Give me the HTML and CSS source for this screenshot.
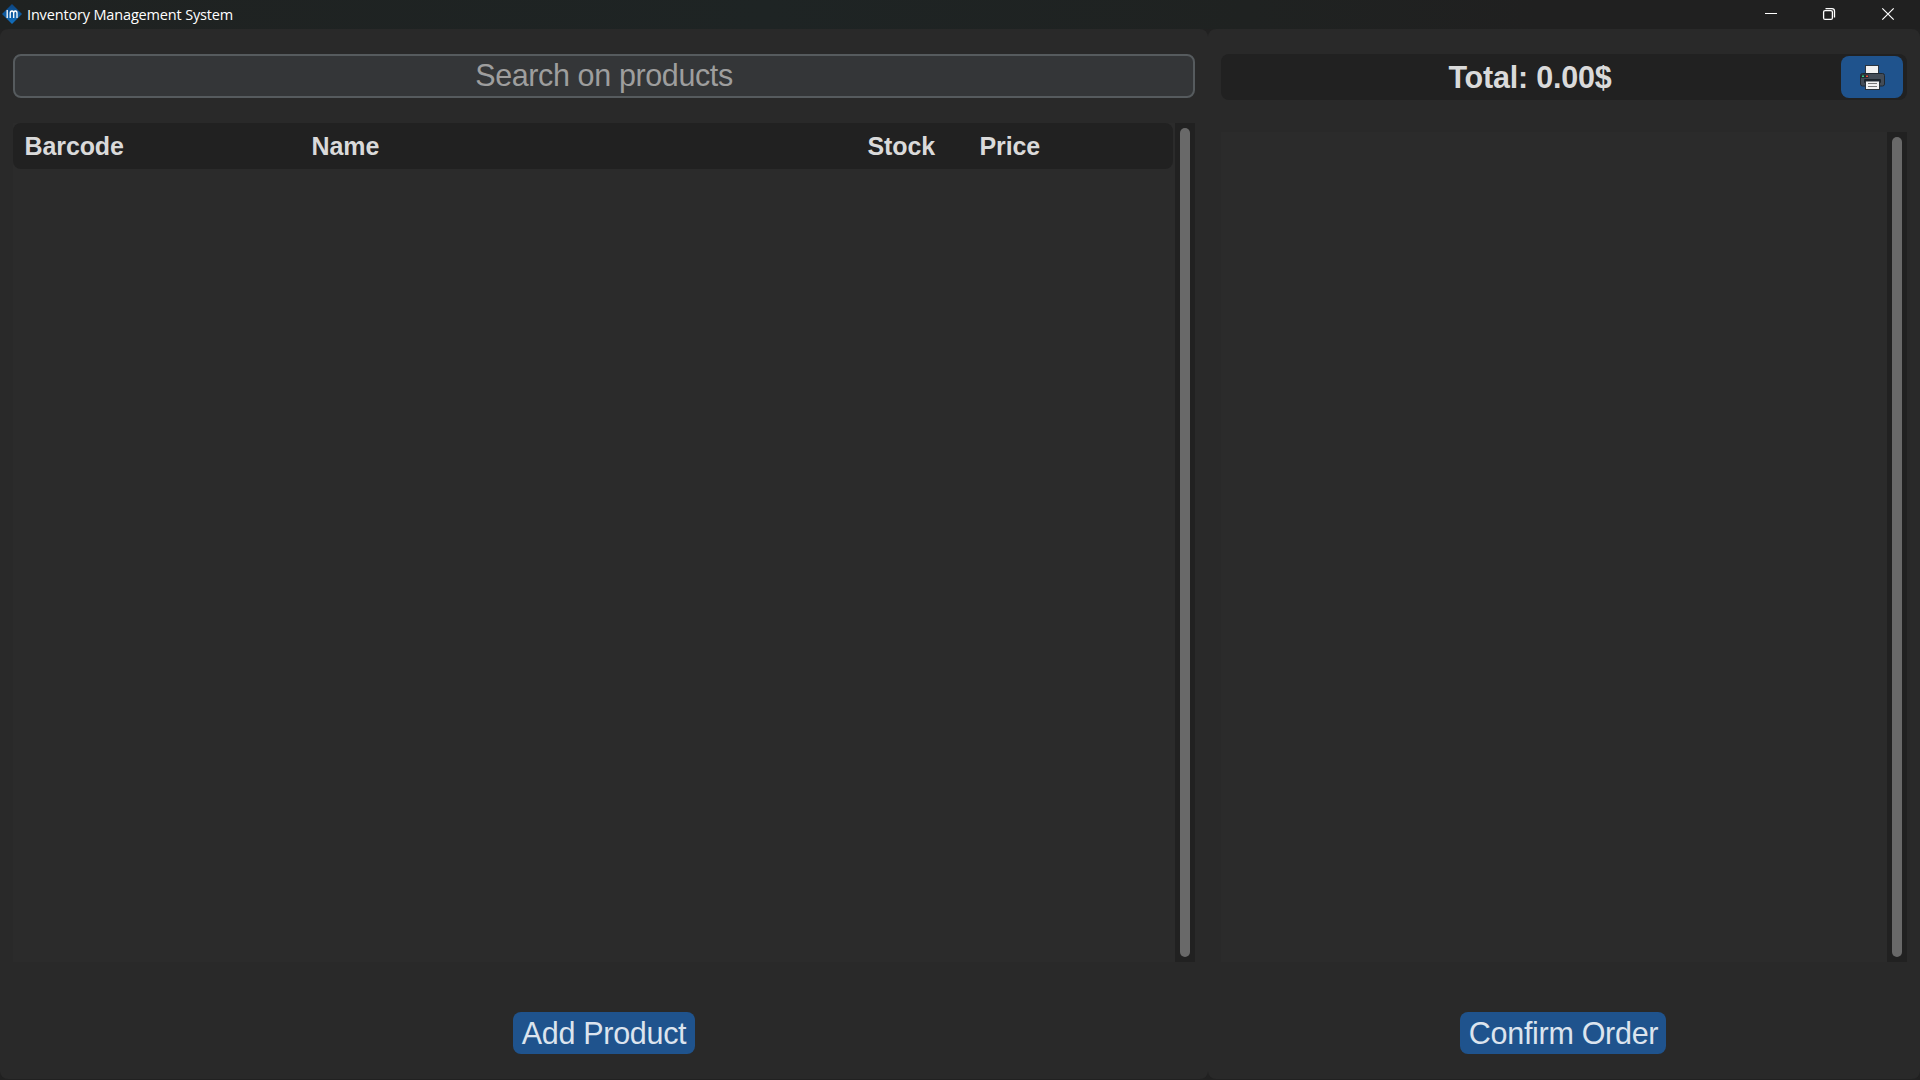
FILE: index.html
```html
<!DOCTYPE html>
<html lang="en">
<head>
<meta charset="utf-8">
<title>Inventory Management System</title>
<link rel="stylesheet" href="styles.css">
</head>
<body>
<header class="titlebar">
  <svg class="app-icon" width="20" height="20" viewBox="0 0 20 20">
    <defs><linearGradient id="g" x1="0" y1="0" x2="0" y2="1"><stop offset="0" stop-color="#0d4580"/><stop offset="1" stop-color="#1170bf"/></linearGradient></defs>
    <path d="M10 0 20 10 10 20 0 10Z" fill="url(#g)"/>
    <path d="M5.2 6v8M8.2 14V9.200Q8.200 7 10 7Q11.700 7 11.700 9.200V14M11.700 9.200Q11.700 7 13.400 7Q15 7 15 9.200V14" fill="none" stroke="#fff" stroke-width="1.3"/>
  </svg>
  <h1 class="title">Inventory Management System</h1>
  <div class="window-controls">
    <svg width="58" height="29" viewBox="0 0 58 29"><path d="M23 13.500h12" stroke="#fff"/></svg>
    <svg width="58" height="29" viewBox="0 0 58 29" fill="none" stroke="#fff" stroke-width="1.300"><rect x="23.600" y="10.600" width="8.800" height="8.800" rx="1.500"/><path d="M25.500 8.600H32q2.500 0 2.500 2.500v6.500"/></svg>
    <svg width="58" height="29" viewBox="0 0 58 29"><path d="m24.300 8.300 11.400 11.400m0-11.400L24.300 19.700" stroke="#fff" stroke-width="1.200"/></svg>
  </div>
</header>
<main class="workspace">
  <section class="panel products">
    <input class="search" type="text" placeholder="Search on products">
    <div class="scroll-area product-list">
      <div class="list">
        <div class="table-header"><span>Barcode</span><span>Name</span><span>Stock</span><span>Price</span></div>
      </div>
      <div class="scrollbar"><div class="thumb"></div></div>
    </div>
    <button class="button add">Add Product</button>
  </section>
  <section class="panel order">
    <div class="total-bar">
      <span class="total">Total: 0.00$</span>
      <button class="print" aria-label="Print">
        <svg width="25" height="25" viewBox="0 0 25 25">
          <rect x="5" y="0" width="14" height="10" fill="#2b3540"/><rect x="6" y="1" width="12" height="8" fill="#f1f1f1"/>
          <rect x=".5" y="8.500" width="24" height="12.500" rx="2" fill="#434c57" stroke="#202830"/>
          <rect x="1" y="9.500" width="7.500" height="3.500" fill="#222b33"/>
          <rect x="2" y="10.500" width="2" height="1.500" fill="#2fd087"/><rect x="6" y="10.500" width="2" height="1.500" fill="#f0523e"/>
          <rect x="4" y="14" width="17" height="4" rx="1" fill="#1c242c"/>
          <rect x="5" y="16" width="15" height="9" fill="#29323a"/><rect x="6" y="16.500" width="13" height="7.500" fill="#f1f1f1"/>
          <path d="M8 18.500h9M8 21.500h9" stroke="#777"/>
        </svg>
      </button>
    </div>
    <div class="scroll-area order-list">
      <div class="list"></div>
      <div class="scrollbar"><div class="thumb"></div></div>
    </div>
    <button class="button confirm">Confirm Order</button>
  </section>
</main>
</body>
</html>
```
FILE: styles.css
```css
* { box-sizing: border-box; }
body {
  margin: 0;
  height: 100vh;
  display: flex;
  flex-direction: column;
  overflow: hidden;
  background: #212121;
  font-family: "Liberation Sans", Arial, sans-serif;
}
.titlebar {
  flex: 0 0 29px;
  display: flex;
  background: linear-gradient(90deg, #1f2221, #1e2424 40%, #1f2221 65%, #202020 80%);
}
.app-icon { margin: 4px 5px 0 2px; }
.title {
  margin: 0;
  color: #fff;
  font: 400 14.5px/29px "Open Sans", sans-serif;
  letter-spacing: -0.16px;
}
.window-controls { display: flex; margin-left: auto; margin-right: 4px; }
.workspace {
  flex: 1;
  display: grid;
  grid-template-columns: 1208px 1fr;
  padding-bottom: 1px;
}
.panel {
  display: flex;
  flex-direction: column;
  align-items: stretch;
  padding: 25px 13px;
  border-radius: 8px;
  background: #292929;
}
.search {
  height: 44px;
  padding: 0 0 2px;
  border: 2px solid #565b5e;
  border-radius: 8px;
  background: #343638;
  color: #dce4ee;
  font: 30.5px "Liberation Sans", Arial, sans-serif;
  letter-spacing: -0.38px;
  text-align: center;
}
.search::placeholder { color: #9e9e9e; opacity: 1; }
.scroll-area { display: flex; background: #2b2b2b; }
.product-list { height: 839px; margin-top: 25px; }
.order-list { height: 830px; margin-top: 32px; }
.list { flex: 1; padding-right: 2px; }
.scrollbar { width: 20px; padding: 5px; background: #212121; }
.thumb { height: 100%; border-radius: 5px; background: #696969; }
.table-header {
  display: grid;
  grid-template-columns: 287px 556px 112px 1fr;
  height: 46px;
  padding-left: 11.5px;
  border-radius: 8px;
  background: #212121;
  color: #dadada;
  font-weight: 700;
  font-size: 25px;
  line-height: 46px;
  letter-spacing: -0.1px;
}
.button {
  align-self: center;
  height: 42px;
  margin-top: 50px;
  padding: 1px 0 0;
  border: 0;
  border-radius: 8px;
  background: #1f538d;
  color: #dce4ee;
  font: 30.5px/41px "Liberation Sans", Arial, sans-serif;
  letter-spacing: -0.3px;
  white-space: nowrap;
}
.add { width: 182px; }
.confirm { width: 206px; margin-right: 2px; padding-left: 1px; }
.total-bar {
  display: flex;
  align-items: center;
  height: 46px;
  padding-right: 4px;
  border-radius: 8px;
  background: #212121;
}
.total {
  flex: 1;
  padding-right: 2px;
  color: #dadada;
  font-weight: 700;
  font-size: 30.5px;
  line-height: 46px;
  letter-spacing: -0.2px;
  text-align: center;
}
.print {
  width: 62px;
  height: 42px;
  display: flex;
  align-items: center;
  justify-content: center;
  padding: 0 0 0 1px;
  border: 0;
  border-radius: 8px;
  background: #1f538d;
}
```
